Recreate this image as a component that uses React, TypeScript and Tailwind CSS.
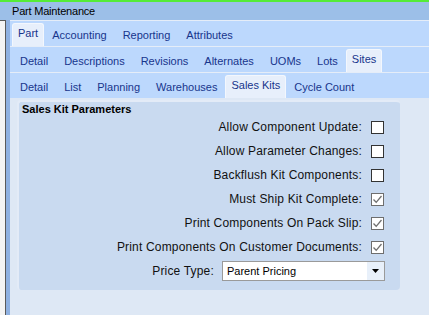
import React from 'react';

const FONT = { fontFamily: '"Liberation Sans", Arial, sans-serif' };

const Tab: React.FC<{ label: string; active?: boolean }> = ({ label, active }) =>
  active ? (
    <div className="h-[23px] px-[5px] pt-[3px] rounded-t-[3px] bg-[#e7effb] border border-b-0 border-[#f3f7fd] text-[#17358c]">
      {label}
    </div>
  ) : (
    <div className="h-[23px] px-[8px] pt-[6px] text-[#17358c]">{label}</div>
  );

const TabRow: React.FC<{ tabs: string[]; active: string }> = ({ tabs, active }) => (
  <>
    <div className="h-[1px] bg-[#e5edf8]" />
    <div className="h-[25px] flex items-end pl-[2px] bg-[#bcd8fd] text-[11px] leading-[13px]">
      {tabs.map(t => (
        <Tab key={t} label={t} active={t === active} />
      ))}
    </div>
  </>
);

const CheckBox: React.FC<{ checked?: boolean }> = ({ checked }) =>
  checked ? (
    <div className="w-[13px] h-[13px] border border-[#6e6e6e] bg-white flex items-center justify-center">
      <svg width="11" height="11" viewBox="0 0 11 11">
        <path d="M1.5 5.5 L4.2 8.3 L9.5 2" fill="none" stroke="#707070" strokeWidth="1.3" />
      </svg>
    </div>
  ) : (
    <div className="w-[13px] h-[13px] border border-[#333] bg-white" />
  );

const params: { label: string; checked: boolean }[] = [
  { label: 'Allow Component Update:', checked: false },
  { label: 'Allow Parameter Changes:', checked: false },
  { label: 'Backflush Kit Components:', checked: false },
  { label: 'Must Ship Kit Complete:', checked: true },
  { label: 'Print Components On Pack Slip:', checked: true },
  { label: 'Print Components On Customer Documents:', checked: true },
];

const App: React.FC = () => {
  return (
    <div className="w-[429px] h-[315px] overflow-hidden flex flex-col bg-[#dee8f5]" style={FONT}>
      <div className="h-[2px] bg-[#55ec37]" />
      <div className="h-[18px] bg-[#9cbfe8] pl-[12px] pt-[3px] text-[11px] leading-[13px] tracking-[-0.2px] text-black">
        Part Maintenance
      </div>
      <div className="flex-1 flex">
        {/* left edge */}
        <div className="w-[10px] flex">
          <div className="w-[6px] bg-[#f4f4f4] border-t border-r border-[#5a5a5a]" />
          <div className="w-[4px] bg-[#8fb1e1]" />
        </div>

        <div className="flex-1 flex flex-col">
          <TabRow tabs={['Part', 'Accounting', 'Reporting', 'Attributes']} active="Part" />
          <TabRow
            tabs={['Detail', 'Descriptions', 'Revisions', 'Alternates', 'UOMs', 'Lots', 'Sites']}
            active="Sites"
          />
          <TabRow
            tabs={['Detail', 'List', 'Planning', 'Warehouses', 'Sales Kits', 'Cycle Count']}
            active="Sales Kits"
          />

          <div className="flex-1 pl-[7px] pt-[2px]">
            <div className="w-[383px] h-[190px] rounded-[4px] bg-[#c9daf0] border-l-[2px] border-t-[2px] border-[#e3ebf7] flex flex-col">
              <div className="h-[13px] pl-[3px] pt-[1px] text-[11px] leading-[13px] font-bold text-black">
                Sales Kit Parameters
              </div>
              <div className="flex flex-col text-[12px] text-[#111] pr-[16px]">
                {params.map(p => (
                  <div key={p.label} className="h-[24px] flex items-center justify-end gap-[9px]">
                    <span className="tracking-[0.18px]">{p.label}</span>
                    <CheckBox checked={p.checked} />
                  </div>
                ))}
                <div className="h-[24px] flex items-center justify-end gap-[8px]">
                  <span className="tracking-[0.18px]">Price Type:</span>
                  <div className="w-[163px] h-[20px] mr-[-1px] bg-white border border-[#9a9a9a] flex items-stretch text-[11px]">
                    <div className="flex-1 pl-[4px] flex items-center text-black">Parent Pricing</div>
                    <div className="w-[17px] bg-[#e8f0fa] flex items-center justify-center">
                      <svg width="7" height="4" viewBox="0 0 7 4">
                        <path d="M0 0 H7 L3.5 4 Z" fill="#000" />
                      </svg>
                    </div>
                  </div>
                </div>
              </div>
            </div>
          </div>
        </div>
      </div>
    </div>
  );
};

export default App;
